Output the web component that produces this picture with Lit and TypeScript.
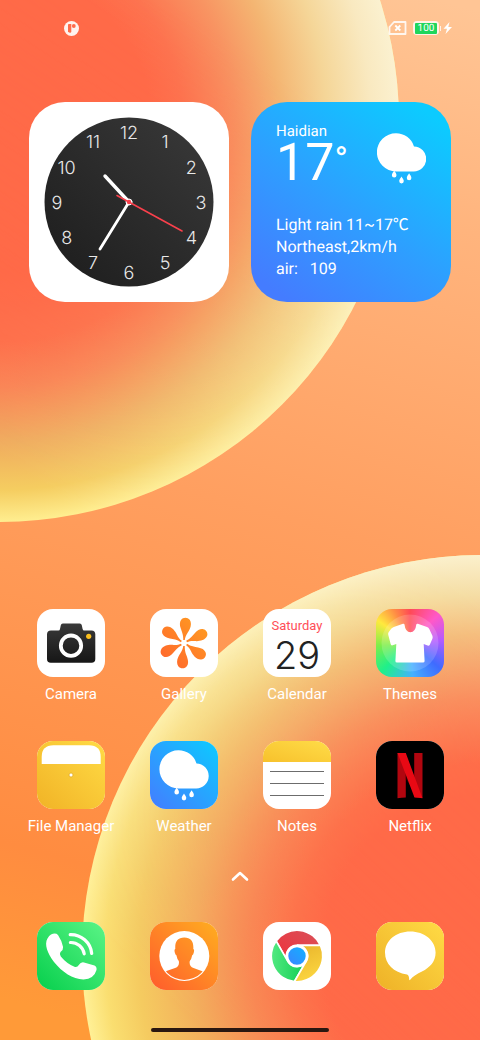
import { LitElement, html, svg, css, type TemplateResult, type SVGTemplateResult } from "lit";
import { customElement } from "lit/decorators.js";

const cloud = svg`
  <path fill="#fff" d="M28.5 9.2a18.9 18.9 0 0 1 18 13.2a12.4 12.4 0 0 1-.6 25H28.5a19.1 19.1 0 0 1 0-38.2z"/>
  ${[[26.7, 46.6], [34, 52.4], [41.6, 49.2]].map(
    ([x, y]) => svg`<path fill="#fff" transform="translate(${x} ${y})"
      d="M0 0c.9 1.600 2.300 3 2.300 4.700a2.300 2.300 0 0 1-4.600 0C-2.300 3-.9 1.600 0 0z"/>`
  )}`;

const gradient = (id: string, from: string, to: string) => svg`
  <linearGradient id=${id} x1="0" y1="1" x2="1" y2="0">
    <stop offset="0" stop-color=${from}/><stop offset="1" stop-color=${to}/>
  </linearGradient>`;

const turns = [0, 60, 120, 180, 240, 300];

const art: Record<string, SVGTemplateResult> = {
  camera: svg`
    <defs><linearGradient id="body" x1="0" y1="0" x2="0" y2="1">
      <stop offset="0" stop-color="#3a3a3a"/><stop offset="1" stop-color="#161616"/>
    </linearGradient></defs>
    <path fill="url(#body)" d="M14 21.500h7.500q1.200 0 1.500-1.500l.8-3.800q.4-1.700 2-1.700h17q1.600 0 2 1.700l.8 3.800q.3 1.500 1.500 1.500H54.500q3.800 0 3.800 3.800v24.700q0 3.800-3.800 3.800H13.800q-3.800 0-3.800-3.800V25.300q0-3.800 4-3.800z"/>
    <circle cx="34" cy="36.700" r="10.200" fill="none" stroke="#fff" stroke-width="3.800"/>
    <circle cx="51.700" cy="27.300" r="2.600" fill="#fbbf1d"/>`,
  gallery: svg`
    <defs>${gradient("petal", "#ff5630", "#ffac1e")}
      <clipPath id="flower">${turns.map(
        (t) => svg`<path transform="rotate(${t} 34 34)" d="M33.200 31C33.500 26 32 23 30.800 19.500C29.500 16 29.600 13 31 11C33 8 37.500 7.800 39.700 10.800C42.500 15 40 20.500 37.500 24C36 26.200 35 28.500 34.800 31Z"/>`
      )}</clipPath></defs>
    <rect width="68" height="68" fill="url(#petal)" clip-path="url(#flower)"/>`,
  themes: svg`
    <circle cx="34" cy="34" r="28.500" fill="#fff" opacity=".16"/>
    <path fill="#fff" d="M27 14.800q1.200-.4 1.500.8q.8 7.600 5.900 7.600t5.900-7.600q.3-1.200 1.500-.8l9.200 3.200q1.600.6 2.400 2.200l3 6.500q.6 1.500 0 3l-2.600 6q-.7 1.300-2.200.8l-3.900-1.600l.9 17q0 1.700-1.600 1.700H21q-1.700 0-1.600-1.700l.9-17l-3.700 1.400q-1.500.5-1.900-1l-2.400-9.300q-.4-1.600.3-2.800l2.800-3.600q1-1.200 2.400-1.700z"/>`,
  files: svg`
    <defs>${gradient("folder", "#f1b326", "#ffdb45")}</defs>
    <rect width="68" height="68" fill="url(#folder)"/>
    <path fill="#fff" d="M4.700 23V16Q4.700 4.300 16.500 4.300H52Q63.700 4.300 63.700 16V23z"/>
    <circle cx="34" cy="34" r="2" fill="#fff" stroke="#e0a81c" stroke-width=".7"/>`,
  weather: svg`
    <defs>${gradient("sky", "#447cff", "#0ccbff")}</defs>
    <rect width="68" height="68" fill="url(#sky)"/>${cloud}`,
  notes: svg`
    <defs>${gradient("pad", "#f7c12c", "#ffdc48")}</defs>
    <rect width="68" height="21" fill="url(#pad)"/>
    <path stroke="#6c6c6c" stroke-width="1" d="M7 30.500h54M7 42.500h54M7 54.500h54"/>`,
  netflix: svg`
    <rect width="68" height="68" fill="#000"/>
    <path fill="#b1060f" d="M21.500 12h8.300v44.400q-4 .2-8.300.8zM38.200 12h8.300v44.900l-8.300-1z"/>
    <path fill="#7c050b" d="M29.800 32v6l8.400 12V34z" opacity=".35"/>
    <path fill="#e80914" d="M21.500 12h8.300l16.700 45.200q-4-.6-8-.8z"/>`,
  phone: svg`
    <defs>${gradient("call", "#06cf4c", "#5bf486")}</defs>
    <rect width="68" height="68" fill="url(#call)"/>
    <path fill="#fff" d="M14 12.500Q18.500 10.500 21 13Q24.500 18 26.100 25Q26.500 27.500 23.500 30Q22 32 23.800 34.500Q30 42 38 45Q40.500 45.500 41.800 43Q43.800 39.800 47 40.500L57.500 43.500Q60 44.500 59.500 48Q57 57 46.500 57.400C36 57.500 25 50 17 40C10.500 31 7 22.500 10.500 16.500Q12 13.500 14 12.500Z"/>
    <path fill="none" stroke="#fff" stroke-width="3.200" stroke-linecap="round" d="M33.200 12.600A21 21 0 0 1 54.700 31.500M33.400 20.500A13.500 13.500 0 0 1 47.200 31.800"/>`,
  contacts: svg`
    <defs>${gradient("person", "#ff5b2c", "#ffae20")}
      <clipPath id="disc"><circle cx="34.300" cy="34" r="23.900"/></clipPath></defs>
    <rect width="68" height="68" fill="url(#person)"/>
    <mask id="bust"><circle cx="34.300" cy="34" r="25" fill="#fff"/>
      <path clip-path="url(#disc)" fill="#000" d="M34.300 15.500C41 15.500 43.800 19.500 43.300 27Q44.600 27.500 43.800 30.500Q43.200 33 42.200 33.200Q41.500 37 39.800 39Q38.800 44 43.500 46L53 49.500V62H15V49.500L25.100 46Q29.800 44 28.800 39Q27.100 37 26.400 33.200Q25.400 33 24.800 30.500Q24 27.500 25.300 27C24.800 19.500 27.600 15.500 34.300 15.500Z"/></mask>
    <rect width="68" height="68" fill="#fff" mask="url(#bust)"/>`,
  chrome: svg`
    <defs>${gradient("red", "#f0303a", "#d8525a")}${gradient("yellow", "#e5ad28", "#ffdc44")}
      ${gradient("green", "#06c94b", "#62f08c")}${gradient("blue", "#3d82ff", "#0fb4ff")}</defs>
    <g transform="translate(34 34)" stroke="#fff" stroke-width="1.700">
      ${[["red", 0], ["green", 240], ["yellow", 120]].map(
        ([tone, turn]) => svg`<path fill="url(#${tone})" transform="rotate(${turn})"
          d="M23.500-10.600A25.800 25.800 0 0 0-20.900-15.100L-9.200 5.300A10.600 10.600 0 0 1 0-10.600Z"/>`
      )}
      <circle r="10" fill="url(#blue)" stroke-width="2.600"/>
    </g>`,
  messages: svg`
    <defs>${gradient("bubble", "#eeb127", "#ffdb45")}</defs>
    <rect width="68" height="68" fill="url(#bubble)"/>
    <path fill="#fff" d="M34.300 9.400C48.500 9.400 59.600 18.500 59.600 30.500C59.600 39.500 54 45.500 46 49.500C41 52 37 54 34.200 57.700Q33.300 58.700 33.200 57.500Q33 53 31 52.500C17.500 50.500 9 42 9 30.500C9 18.500 20 9.400 34.300 9.400Z"/>`,
};

const pages = [
  { id: "camera", label: "Camera" },
  { id: "gallery", label: "Gallery" },
  { id: "calendar", label: "Calendar" },
  { id: "themes", label: "Themes" },
  { id: "files", label: "File Manager" },
  { id: "weather", label: "Weather" },
  { id: "notes", label: "Notes" },
  { id: "netflix", label: "Netflix" },
];

const dock = [
  { id: "phone", label: "Phone" },
  { id: "contacts", label: "Contacts" },
  { id: "chrome", label: "Chrome" },
  { id: "messages", label: "Messages" },
];

@customElement("app-root")
export class AppRoot extends LitElement {
  static styles = css`
    :host {
      display: block;
      position: relative;
      min-height: 100vh;
      overflow: hidden;
      font-family: Roboto, "Noto Sans CJK SC", sans-serif;
      text-rendering: geometricPrecision;
      color: #fff;
    }
    .wallpaper {
      position: absolute;
      inset: 0;
      width: 100%;
      height: 100%;
    }
    .screen {
      position: relative;
      display: flex;
      flex-direction: column;
      min-height: 100vh;
    }
    .status {
      display: flex;
      align-items: center;
      gap: 6px;
      height: 56px;
      padding: 0 27px 0 64px;
    }
    .push { margin-left: auto; }
    .battery { display: flex; align-items: center; gap: 1px; }
    .cell {
      display: flex;
      align-items: center;
      justify-content: center;
      width: 22px;
      height: 10px;
      padding: 0;
      border: 2px solid #ffffffc8;
      border-radius: 4px;
    }
    .charge {
      flex: 1;
      padding-top: 1px;
      border-radius: 1px;
      background: #1fd65c;
      font-size: 10px;
      line-height: 10px;
      text-align: center;
    }
    .nub { width: 1px; height: 5px; background: #ffffffc8; }
    .widgets {
      display: grid;
      grid-template-columns: 200px 200px;
      justify-content: space-between;
      padding: 46px 29px 0;
    }
    .widget { height: 200px; border-radius: 36px; overflow: hidden; }
    .clock { background: #fff; }
    .clock svg { display: block; width: 100%; }
    .numeral { font: 300 18px Inter, sans-serif; fill: #e9e9e9; text-anchor: middle; }
    .forecast {
      box-sizing: border-box;
      padding: 20px 25px;
      background: linear-gradient(35deg, #447cff 8%, #2f9dff 45%, #0ccbff 92%);
    }
    .now { display: flex; justify-content: space-between; height: 92px; }
    .place { font-size: 15px; line-height: 18px; }
    .temp { display: flex; font-size: 52px; line-height: 46px; }
    .degree { font-size: 36px; line-height: 40px; }
    .sky { margin-top: 11px; }
    .details { margin: 0; font-size: 16px; line-height: 22px; white-space: nowrap; }
    .air { margin-left: 8px; }
    .apps {
      display: grid;
      grid-template-columns: repeat(4, 68px);
      justify-content: space-between;
      row-gap: 36px;
      margin-top: auto;
      padding: 0 36px 0 37px;
    }
    .app {
      display: flex;
      flex-direction: column;
      align-items: center;
      gap: 6px;
      padding: 0;
      border: 0;
      background: none;
      color: inherit;
      font: inherit;
      cursor: pointer;
    }
    .tile {
      display: block;
      width: 68px;
      height: 68px;
      border-radius: 16px;
      overflow: hidden;
      background: #fff;
    }
    .tile svg { display: block; }
    .tile.themes {
      background: conic-gradient(#ff4a55 0deg, #ff58c8 45deg, #b35bff 85deg, #3f6bff 130deg,
        #45b0ff 175deg, #1ff08a 225deg, #7dee4a 265deg, #ffe93e 305deg, #ff8a45 335deg, #ff4a55 360deg);
    }
    .tile.calendar { display: flex; flex-direction: column; align-items: center; }
    .weekday { padding-top: 9px; font-size: 13px; line-height: 16px; color: #ff4e58; }
    .day { font: 300 38px/42px Inter, sans-serif; color: #222; }
    .label { font-size: 15px; line-height: 22px; white-space: nowrap; }
    .up { align-self: center; margin: 33px 0 0; padding: 0; border: 0; background: none; }
    .up svg { display: block; }
    .dock { margin-top: 40px; }
    .home { align-self: center; width: 37%; height: 4px; margin: 38px 0 8px; border-radius: 2px; background: #2a1710; }
  `;

  private wallpaper() {
    return html`<svg class="wallpaper" viewBox="0 0 480 1040" preserveAspectRatio="xMidYMid slice" aria-hidden="true">
      <defs>
        <linearGradient id="base" gradientUnits="userSpaceOnUse" x1="440" y1="0" x2="150" y2="1040">
          <stop offset="0" stop-color="#ffc595"/><stop offset=".2" stop-color="#ffb47d"/>
          <stop offset=".5" stop-color="#ff9f60"/><stop offset=".86" stop-color="#ff8c40"/>
          <stop offset="1" stop-color="#ff9a38"/>
        </linearGradient>
        <radialGradient id="warmTop" gradientUnits="userSpaceOnUse" cx="-1" cy="122" r="400">
          <stop offset=".55" stop-color="#ff6a48"/><stop offset=".66" stop-color="#fb8054"/>
          <stop offset=".8" stop-color="#f0ac5e"/><stop offset=".92" stop-color="#f5cd60"/>
          <stop offset="1" stop-color="#ffee90"/>
        </radialGradient>
        <radialGradient id="paleTop" gradientUnits="userSpaceOnUse" cx="-1" cy="122" r="400">
          <stop offset=".38" stop-color="#ff6a48"/><stop offset=".46" stop-color="#fd7450"/>
          <stop offset=".59" stop-color="#f89462"/><stop offset=".7" stop-color="#f4b572"/>
          <stop offset=".82" stop-color="#f5d698"/>
          <stop offset=".93" stop-color="#f9e9c0"/><stop offset="1" stop-color="#fbf1d0"/>
        </radialGradient>
        <radialGradient id="warmLow" gradientUnits="userSpaceOnUse" cx="482" cy="955" r="400">
          <stop offset=".4" stop-color="#ff6a48"/><stop offset=".58" stop-color="#f98a54"/>
          <stop offset=".72" stop-color="#f3ae5c"/><stop offset=".86" stop-color="#f5cb60"/>
          <stop offset=".94" stop-color="#fade70"/><stop offset="1" stop-color="#fff096"/>
        </radialGradient>
        <radialGradient id="paleLow" gradientUnits="userSpaceOnUse" cx="482" cy="955" r="400">
          <stop offset=".48" stop-color="#ff6a48"/><stop offset=".64" stop-color="#fa8c60"/>
          <stop offset=".8" stop-color="#f4bd80"/><stop offset=".9" stop-color="#f5dda5"/>
          <stop offset="1" stop-color="#fbf0cc"/>
        </radialGradient>
        <linearGradient id="fadeTop" gradientUnits="userSpaceOnUse" x1="320" y1="100" x2="60" y2="500">
          <stop offset="0" stop-color="#fff"/><stop offset="1" stop-color="#000"/>
        </linearGradient>
        <linearGradient id="fadeLow" gradientUnits="userSpaceOnUse" x1="460" y1="580" x2="120" y2="960">
          <stop offset="0" stop-color="#fff"/><stop offset="1" stop-color="#000"/>
        </linearGradient>
        <mask id="maskTop"><rect width="480" height="1040" fill="url(#fadeTop)"/></mask>
        <mask id="maskLow"><rect width="480" height="1040" fill="url(#fadeLow)"/></mask>
      </defs>
      <rect x="-500" width="1480" height="1040" fill="url(#base)"/>
      <circle cx="-1" cy="122" r="400" fill="url(#warmTop)"/>
      <circle cx="-1" cy="122" r="400" fill="url(#paleTop)" mask="url(#maskTop)"/>
      <circle cx="482" cy="955" r="400" fill="url(#warmLow)"/>
      <circle cx="482" cy="955" r="400" fill="url(#paleLow)" mask="url(#maskLow)"/>
    </svg>`;
  }

  private clock() {
    const numerals = Array.from({ length: 12 }, (_, i) => {
      const angle = ((i + 1) * Math.PI) / 6;
      return svg`<text class="numeral" x=${100 + 72 * Math.sin(angle)} y=${106.5 - 70 * Math.cos(angle)}>${i + 1}</text>`;
    });
    return html`<svg viewBox="0 0 200 200" role="img" aria-label="Clock">
      <defs>${gradient("face", "#1c1c1c", "#3a3a3a")}</defs>
      <circle cx="100" cy="100" r="84.500" fill="url(#face)"/>
      ${numerals}
      <g fill="none" stroke="#fff" stroke-linecap="round">
        <path stroke-width="3.400" d="M100 100L76 74"/>
        <path stroke-width="2.800" d="M100 100L71 147"/>
        <circle cx="100" cy="100" r="3" fill="#fff"/>
        <path stroke="#f9404c" stroke-width="1.600" d="M88 93.500L153 129"/>
      </g>
      <circle cx="100" cy="100" r="2.200" fill="#f9404c"/>
    </svg>`;
  }

  private tile(id: string): TemplateResult {
    if (id === "calendar") {
      return html`<span class="tile calendar"><span class="weekday">Saturday</span><span class="day">29</span></span>`;
    }
    return html`<span class="tile ${id}"><svg width="68" height="68" viewBox="0 0 68 68" aria-hidden="true">${art[id]}</svg></span>`;
  }

  render() {
    return html`
      ${this.wallpaper()}
      <div class="screen">
        <header class="status">
          <svg width="15" height="15" viewBox="0 0 15 15" aria-hidden="true">
            <circle cx="7.500" cy="7.500" r="7.500" fill="#fff3ee"/>
            <path fill="#ff6c4b" d="M4.800 3h2.500v7.600q0 1.200-1.200 1.200T4 10.600V4q0-1 .8-1z"/>
            <circle cx="9.800" cy="5" r="1.900" fill="#ff6c4b"/>
          </svg>
          <svg class="push" width="19" height="16" viewBox="0 0 19 16" aria-hidden="true">
            <path fill="none" stroke="#fff" stroke-opacity=".85" stroke-width="1.800" stroke-linejoin="round" d="M6 2H17.500V14H1.500V7z"/>
            <path stroke="#fff" stroke-width="1.800" d="M7.300 5.500l5 5M12.300 5.500l-5 5"/>
          </svg>
          <div class="battery">
            <div class="cell"><span class="charge">100</span></div><span class="nub"></span>
            <svg width="11" height="12" viewBox="0 0 11 12" aria-hidden="true">
              <path fill="#fff" d="M7.500 0L1.500 6.800H5L3.500 12L10 4.900H6.300z"/>
            </svg>
          </div>
        </header>
        <section class="widgets">
          <div class="widget clock">${this.clock()}</div>
          <div class="widget forecast">
            <div class="now">
              <div>
                <div class="place">Haidian</div>
                <div class="temp">17<span class="degree">°</span></div>
              </div>
              <svg class="sky" width="49" height="52" viewBox="9.500 9 49 52" aria-hidden="true">${cloud}</svg>
            </div>
            <p class="details">Light rain 11~17℃</p>
            <p class="details">Northeast,2km/h</p>
            <p class="details">air: <span class="air">109</span></p>
          </div>
        </section>
        <main class="apps">
          ${pages.map(
            (app) => html`<button class="app">${this.tile(app.id)}<span class="label">${app.label}</span></button>`
          )}
        </main>
        <button class="up" aria-label="All apps">
          <svg width="18" height="12" viewBox="0 0 18 12">
            <path fill="none" stroke="#fff" stroke-width="2.600" stroke-linecap="round" stroke-linejoin="round" d="M2 9.500L9 3l7 6.500"/>
          </svg>
        </button>
        <nav class="apps dock">
          ${dock.map((app) => html`<button class="app" aria-label=${app.label}>${this.tile(app.id)}</button>`)}
        </nav>
        <div class="home"></div>
      </div>
    `;
  }
}
